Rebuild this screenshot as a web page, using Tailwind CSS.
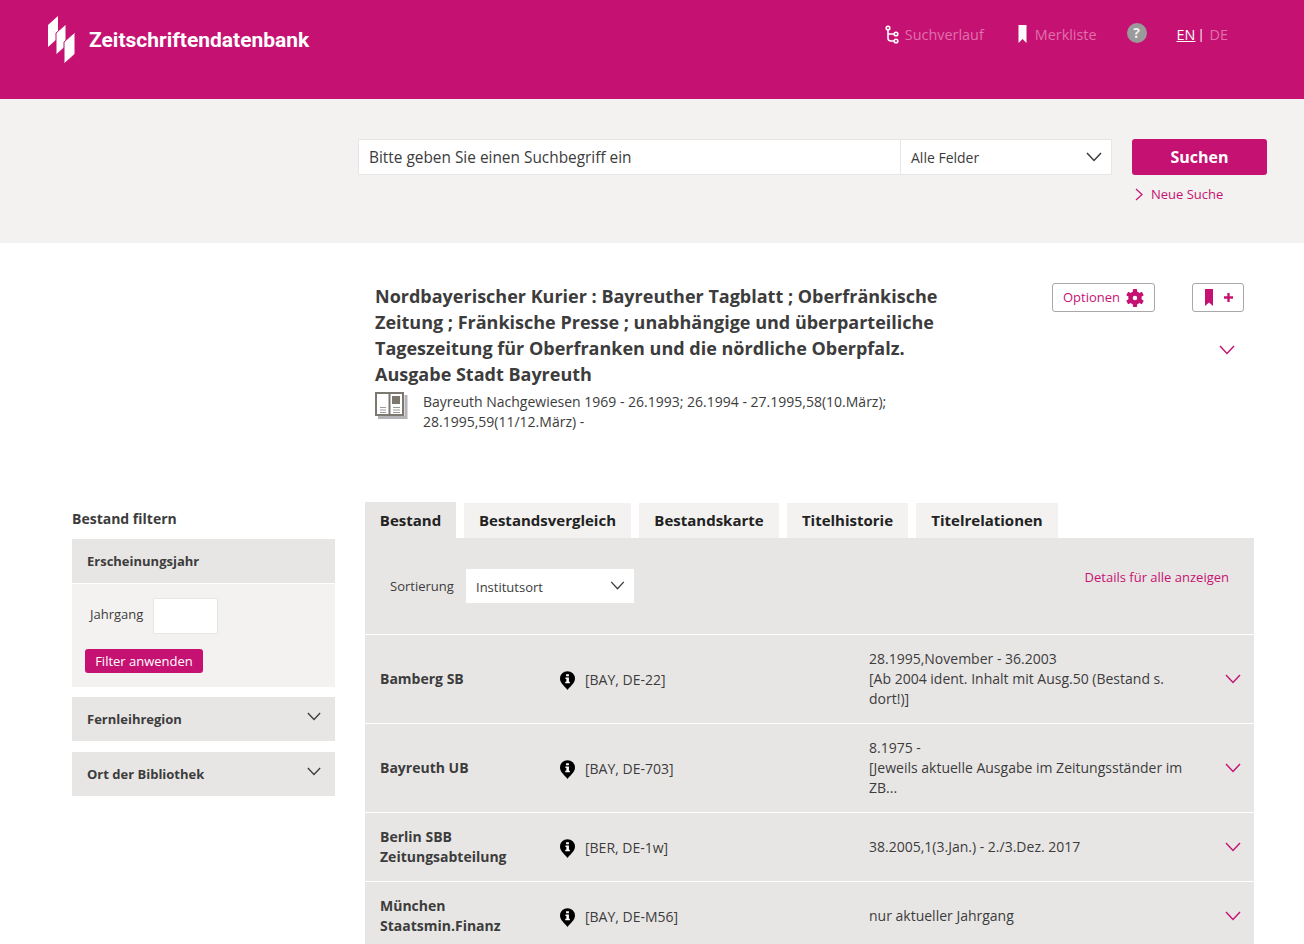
<!DOCTYPE html>
<html lang="de">
<head>
  <meta charset="UTF-8" />
  <title>Zeitschriftendatenbank</title>
  <script src="https://cdn.jsdelivr.net/npm/@tailwindcss/browser@4"></script>
</head>
<body class="h-[944px] overflow-hidden bg-white font-['Open_Sans',sans-serif] text-[14px] text-[#3c3c3c]">

  <!-- header -->
  <header class="h-[99px] bg-[#c51272] flex items-start">
    <svg class="ml-[48px] mt-[16px] w-[27px] h-[48px]" viewBox="48 16 27 48" fill="#fff" stroke="#c51272" stroke-width="1">
      <path stroke="none" d="M48 25 L58 16 V38 L48 47 Z" />
      <path d="M56 33 L66 24 V46 L56 55 Z" />
      <path d="M64 42 L75 32 V54 L64 64 Z" />
    </svg>
    <div class="ml-[14px] mt-[27px] font-['Roboto',sans-serif] font-bold text-[21px] leading-[26px] text-white">Zeitschriftendatenbank</div>
    <nav class="ml-auto mt-[24px] mr-[76px] flex items-center h-[22px] text-[14.4px] text-[#e070ac]">
      <svg class="w-[14px] h-[19px] mr-[6px] mb-[2px]" viewBox="0 0 14 19" fill="none" stroke="#fff" stroke-width="1.6">
        <circle cx="3" cy="3" r="1.8" />
        <circle cx="11" cy="9" r="1.8" />
        <circle cx="11" cy="16" r="1.8" />
        <path d="M3 5 V13 Q3 16 6 16 H9 M3 9 H9" />
      </svg>
      <span>Suchverlauf</span>
      <svg class="ml-[33px] mr-[7px] mb-[2px] w-[11px] h-[18px]" viewBox="0 0 10 18" fill="#fff"><path d="M1 0 H9 V18 L5 14 L1 18 Z" /></svg>
      <span>Merkliste</span>
      <span class="ml-[30px] mb-[4px] w-[20px] h-[20px] rounded-full bg-[#9a9a9a] text-[#f0f0f0] text-[14px] font-bold leading-[20px] text-center">?</span>
      <a class="ml-[30px] text-white underline">EN</a>
      <span class="ml-[2px] mr-[5px] text-white text-[13px]">|</span>
      <span>DE</span>
    </nav>
  </header>

  <!-- search -->
  <section class="h-[144px] bg-[#f3f2f1] pt-[40px] pl-[358px]">
    <div class="flex">
      <div class="w-[543px] h-[36px] bg-white border border-[#e8e6e5] pl-[10px] text-[15.4px] leading-[35px] text-[#3c3c3c]">Bitte geben Sie einen Suchbegriff ein</div>
      <div class="w-[211px] h-[36px] bg-white border border-l-0 border-[#e8e6e5] pl-[10px] pr-[9px] flex items-center justify-between">
        <span>Alle Felder</span>
        <svg class="w-[16px] h-[10px]" viewBox="0 0 16 10" fill="none" stroke="#3c3c3c" stroke-width="1.5"><path d="M1 1 L8 8.5 L15 1" /></svg>
      </div>
      <button class="ml-[20px] w-[135px] h-[36px] rounded-[3px] bg-[#c51272] text-white font-bold text-[16px]">Suchen</button>
    </div>
    <div class="mt-[9px] ml-[777px] flex items-center text-[13px] leading-[20px] text-[#c51272]">
      <svg class="w-[8px] h-[13px] mr-[8px]" viewBox="0 0 8 13" fill="none" stroke="#c51272" stroke-width="1.2"><path d="M1 1 L7 6.5 L1 12" /></svg>
      <span>Neue Suche</span>
    </div>
  </section>

  <!-- title -->
  <section class="h-[259px] pl-[375px] pt-[40px] flex items-start">
    <div class="w-[677px]">
      <h1 class="w-[580px] text-[18px] leading-[26px] font-bold text-[#3c3c3c]">Nordbayerischer Kurier : Bayreuther Tagblatt ; Oberfränkische Zeitung ; Fränkische Presse ; unabhängige und überparteiliche Tageszeitung für Oberfranken und die nördliche Oberpfalz. Ausgabe Stadt Bayreuth</h1>
      <div class="flex mt-[3px]">
        <svg class="w-[33px] h-[28px] mt-[2px] shrink-0" viewBox="0 0 33 28" fill="none">
          <path d="M3 25.5 H31 V3" stroke="#b4b4b8" stroke-width="3" />
          <rect x="1" y="1" width="27" height="22" stroke="#7c7770" stroke-width="2" fill="#fff" />
          <path d="M14.5 1 V23" stroke="#7c7770" stroke-width="2" />
          <rect x="17" y="4" width="8" height="8" fill="#7c7770" />
          <path d="M5 15.5 H11 M5 18 H11 M5 20.5 H11 M18 15.5 H25 M18 18 H25 M18 20.5 H25" stroke="#9a9a9a" />
        </svg>
        <p class="ml-[15px] w-[500px] text-[14px] leading-[20px] mt-[2px]">Bayreuth Nachgewiesen 1969 - 26.1993; 26.1994 - 27.1995,58(10.März); 28.1995,59(11/12.März) -</p>
      </div>
    </div>
    <div class="w-[192px] shrink-0">
      <div class="flex justify-between">
        <button class="w-[103px] h-[29px] rounded-[3px] border border-[#a8a8a8] text-[13px] text-[#c51272] flex items-center justify-center">
          Optionen
          <svg class="ml-[6px] w-[18px] h-[18px]" viewBox="0 0 24 24" fill="#c51272">
            <circle cx="12" cy="12" r="6" fill="none" stroke="#c51272" stroke-width="6" />
            <rect x="9.2" y="0" width="5.6" height="5" rx="1" />
            <rect x="9.2" y="0" width="5.6" height="5" rx="1" transform="rotate(60 12 12)" />
            <rect x="9.2" y="0" width="5.6" height="5" rx="1" transform="rotate(120 12 12)" />
            <rect x="9.2" y="0" width="5.6" height="5" rx="1" transform="rotate(180 12 12)" />
            <rect x="9.2" y="0" width="5.6" height="5" rx="1" transform="rotate(240 12 12)" />
            <rect x="9.2" y="0" width="5.6" height="5" rx="1" transform="rotate(300 12 12)" />
          </svg>
        </button>
        <button class="w-[52px] h-[29px] rounded-[3px] border border-[#a8a8a8] flex items-center justify-center pl-[2px]">
          <svg class="w-[8px] h-[17px]" viewBox="0 0 8 17" fill="#c51272"><path d="M0 0 H8 V17 L4 13.5 L0 17 Z" /></svg>
          <svg class="ml-[11px] w-[9px] h-[9px]" viewBox="0 0 10 10" stroke="#c51272" stroke-width="2.6"><path d="M0 5 H10 M5 0 V10" /></svg>
        </button>
      </div>
      <svg class="mt-[33px] ml-[167px] w-[16px] h-[10px] block" viewBox="0 0 16 10" fill="none" stroke="#c51272" stroke-width="1.4"><path d="M1 1 L8 8.5 L15 1" /></svg>
    </div>
  </section>

  <!-- main -->
  <main class="flex pl-[72px] items-start">
    <aside class="w-[263px] shrink-0 mr-[30px]">
      <h2 class="mt-[7px] h-[30px] font-bold text-[14px] leading-[20px]">Bestand filtern</h2>
      <div class="h-[44px] bg-[#e8e6e5] px-[15px] pt-[2px] flex items-center font-bold text-[13px]">Erscheinungsjahr</div>
      <div class="mt-px h-[103px] bg-[#f3f2f1] pl-[13px] pt-[14px]">
        <div class="flex items-center">
          <span class="ml-[5px] mb-[2px] text-[13px] w-[63px]">Jahrgang</span>
          <div class="w-[65px] h-[36px] bg-white border border-[#e8e6e5]"></div>
        </div>
        <button class="mt-[15px] w-[118px] h-[24px] pt-[2px] rounded-[3px] bg-[#c51272] text-white text-[13px] block">Filter anwenden</button>
      </div>
      <div class="mt-[10px] h-[44px] bg-[#e8e6e5] pl-[15px] pr-[14px] pt-[2px] flex items-center justify-between font-bold text-[13px]">
        <span>Fernleihregion</span>
        <svg class="w-[14px] h-[9px] mb-[8px]" viewBox="0 0 16 10" fill="none" stroke="#3c3c3c" stroke-width="1.5"><path d="M1 1 L8 8.5 L15 1" /></svg>
      </div>
      <div class="mt-[11px] h-[44px] bg-[#e8e6e5] pl-[15px] pr-[14px] pt-[2px] flex items-center justify-between font-bold text-[13px]">
        <span>Ort der Bibliothek</span>
        <svg class="w-[14px] h-[9px] mb-[8px]" viewBox="0 0 16 10" fill="none" stroke="#3c3c3c" stroke-width="1.5"><path d="M1 1 L8 8.5 L15 1" /></svg>
      </div>
    </aside>

    <div class="w-[889px] shrink-0">
      <!-- tabs -->
      <div class="flex items-end gap-[8px] h-[36px] text-[15px] font-bold text-[#222]">
        <div class="w-[91px] h-[36px] bg-[#e8e6e5] flex items-center justify-center">Bestand</div>
        <div class="w-[167px] h-[35px] bg-[#f3f2f1] flex items-center justify-center">Bestandsvergleich</div>
        <div class="w-[140px] h-[35px] bg-[#f3f2f1] flex items-center justify-center">Bestandskarte</div>
        <div class="w-[121px] h-[35px] bg-[#f3f2f1] flex items-center justify-center">Titelhistorie</div>
        <div class="w-[142px] h-[35px] bg-[#f3f2f1] flex items-center justify-center">Titelrelationen</div>
      </div>

      <div class="bg-[#e8e6e5]">
        <div class="h-[97px] pl-[25px] pr-[25px] pt-[31px] flex items-start border-b border-white">
          <span class="text-[13px] w-[76px] mt-[8px]">Sortierung</span>
          <div class="w-[168px] h-[34px] bg-white pl-[10px] pr-[9px] pt-[4px] flex items-center justify-between text-[13px]">
            <span>Institutsort</span>
            <svg class="w-[15px] h-[9px] mb-[6px]" viewBox="0 0 16 10" fill="none" stroke="#3c3c3c" stroke-width="1.5"><path d="M1 1 L8 8.5 L15 1" /></svg>
          </div>
          <a class="ml-auto -mt-[1px] text-[13px] text-[#c51272]">Details für alle anzeigen</a>
        </div>

        <!-- holdings -->
        <div class="h-[89px] flex items-center border-b border-white">
          <div class="w-[185px] pl-[15px] mb-[2px] font-bold">Bamberg SB</div>
          <svg class="w-[15px] h-[19px] ml-[10px] mt-[3px]" viewBox="0 0 16 20"><path d="M8 0 A8 8 0 0 1 16 8 C16 12.5 11 16 8 20 C5 16 0 12.5 0 8 A8 8 0 0 1 8 0 Z" fill="#000" /><path d="M6.5 3.2 H9.5 V5.4 H6.5 Z M5.8 6.8 H9.5 V11.4 H10.5 V13 H5.6 V11.4 H6.8 V8.3 H5.8 Z" fill="#fff" /></svg>
          <div class="w-[294px] pl-[10px] shrink-0 mt-px">[BAY, DE-22]</div>
          <div class="w-[320px] leading-[20px] shrink-0">28.1995,November - 36.2003<br />[Ab 2004 ident. Inhalt mit Ausg.50 (Bestand s. dort!)]</div>
          <svg class="ml-[36px] w-[16px] h-[10px]" viewBox="0 0 16 10" fill="none" stroke="#c51272" stroke-width="1.4"><path d="M1 1 L8 8.5 L15 1" /></svg>
        </div>
        <div class="h-[89px] flex items-center border-b border-white">
          <div class="w-[185px] pl-[15px] mb-[2px] font-bold">Bayreuth UB</div>
          <svg class="w-[15px] h-[19px] ml-[10px] mt-[3px]" viewBox="0 0 16 20"><path d="M8 0 A8 8 0 0 1 16 8 C16 12.5 11 16 8 20 C5 16 0 12.5 0 8 A8 8 0 0 1 8 0 Z" fill="#000" /><path d="M6.5 3.2 H9.5 V5.4 H6.5 Z M5.8 6.8 H9.5 V11.4 H10.5 V13 H5.6 V11.4 H6.8 V8.3 H5.8 Z" fill="#fff" /></svg>
          <div class="w-[294px] pl-[10px] shrink-0 mt-px">[BAY, DE-703]</div>
          <div class="w-[320px] leading-[20px] shrink-0">8.1975 -<br />[Jeweils aktuelle Ausgabe im Zeitungsständer im ZB...</div>
          <svg class="ml-[36px] w-[16px] h-[10px]" viewBox="0 0 16 10" fill="none" stroke="#c51272" stroke-width="1.4"><path d="M1 1 L8 8.5 L15 1" /></svg>
        </div>
        <div class="h-[69px] flex items-center border-b border-white">
          <div class="w-[185px] pl-[15px] font-bold leading-[20px]">Berlin SBB Zeitungsabteilung</div>
          <svg class="w-[15px] h-[19px] ml-[10px] mt-[3px]" viewBox="0 0 16 20"><path d="M8 0 A8 8 0 0 1 16 8 C16 12.5 11 16 8 20 C5 16 0 12.5 0 8 A8 8 0 0 1 8 0 Z" fill="#000" /><path d="M6.5 3.2 H9.5 V5.4 H6.5 Z M5.8 6.8 H9.5 V11.4 H10.5 V13 H5.6 V11.4 H6.8 V8.3 H5.8 Z" fill="#fff" /></svg>
          <div class="w-[294px] pl-[10px] shrink-0 mt-px">[BER, DE-1w]</div>
          <div class="w-[320px] leading-[20px] shrink-0">38.2005,1(3.Jan.) - 2./3.Dez. 2017</div>
          <svg class="ml-[36px] w-[16px] h-[10px]" viewBox="0 0 16 10" fill="none" stroke="#c51272" stroke-width="1.4"><path d="M1 1 L8 8.5 L15 1" /></svg>
        </div>
        <div class="h-[68px] flex items-center">
          <div class="w-[185px] pl-[15px] font-bold leading-[20px]">München Staatsmin.Finanz</div>
          <svg class="w-[15px] h-[19px] ml-[10px] mt-[3px]" viewBox="0 0 16 20"><path d="M8 0 A8 8 0 0 1 16 8 C16 12.5 11 16 8 20 C5 16 0 12.5 0 8 A8 8 0 0 1 8 0 Z" fill="#000" /><path d="M6.5 3.2 H9.5 V5.4 H6.5 Z M5.8 6.8 H9.5 V11.4 H10.5 V13 H5.6 V11.4 H6.8 V8.3 H5.8 Z" fill="#fff" /></svg>
          <div class="w-[294px] pl-[10px] shrink-0 mt-px">[BAY, DE-M56]</div>
          <div class="w-[320px] leading-[20px] shrink-0">nur aktueller Jahrgang</div>
          <svg class="ml-[36px] w-[16px] h-[10px]" viewBox="0 0 16 10" fill="none" stroke="#c51272" stroke-width="1.4"><path d="M1 1 L8 8.5 L15 1" /></svg>
        </div>
      </div>
    </div>
  </main>
</body>
</html>
